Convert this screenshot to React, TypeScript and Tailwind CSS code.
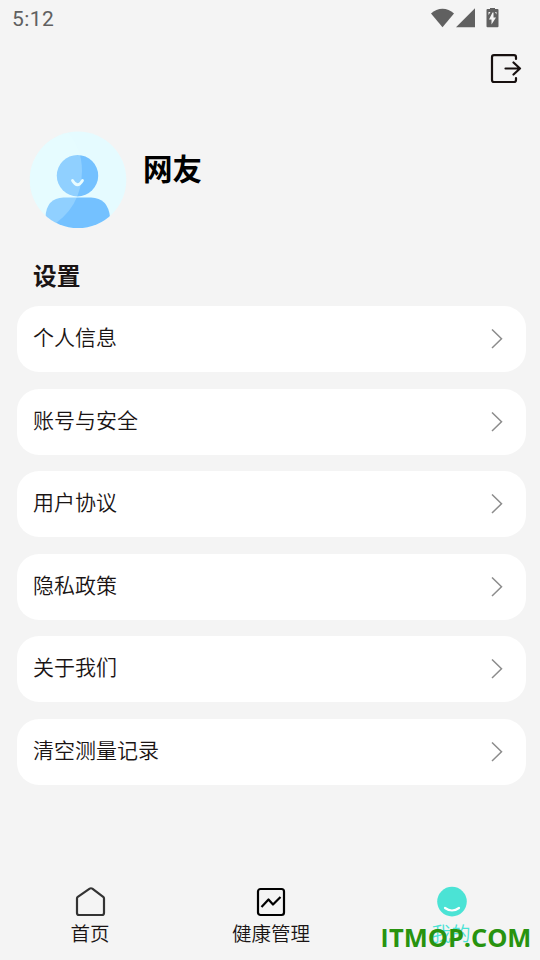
interface MenuRowProps {
  label: string
}

const menuItems = ['个人信息', '账号与安全', '用户协议', '隐私政策', '关于我们', '清空测量记录']

function StatusBar() {
  return (
    <header className="flex h-[38px] items-center justify-between pl-3 pr-[41px] text-[#606060]">
      <span className="font-['Roboto',sans-serif] text-[21px] leading-none tracking-[0.4px]">5:12</span>
      <svg width="68" height="22" viewBox="0 0 68 22" fill="currentColor" aria-hidden="true">
        <path d="M0 5.500C6.500-1 16.500-1 23 5.500L11.500 19.300Z" />
        <path d="M25 19.300 44 .3v19Z" />
        <path
          fillRule="evenodd"
          d="M59 -.5h5v1.500h2.500q1 0 1 1v16.300q0 1-1 1h-10q-1 0-1-1v-16.300q0-1 1-1H59ZM61.500 4.500 58 11.500h2.500v5L65 9.500h-2.500V4.500ZM57.500 4v3L59.500 4ZM64 4l1.500 2.500V4Z"
        />
      </svg>
    </header>
  )
}

function LogoutIcon() {
  return (
    <svg
      width="32"
      height="30"
      viewBox="0 0 32 30"
      fill="none"
      stroke="#17100f"
      strokeWidth="2.200"
      strokeLinecap="round"
      strokeLinejoin="round"
    >
      <path d="M26 5V3.200q0-2-2-2H4q-2 0-2 2V26q0 2 2 2h20q2 0 2-2v-2" />
      <path d="M15.500 14.500H30M23.500 8.500l6.500 6-6.500 6" />
    </svg>
  )
}

function Avatar() {
  return (
    <svg width="98" height="98" viewBox="0 0 98 98" aria-hidden="true">
      <defs>
        <clipPath id="disc">
          <circle cx="49" cy="48.800" r="48.300" />
        </clipPath>
      </defs>
      <g clipPath="url(#disc)">
        <path fill="#e5fbff" d="M0 0h98v98H0z" />
        <circle cx="48.500" cy="44.700" r="20.700" fill="#74c1ff" />
        <path fill="#74c1ff" d="M16.500 86q1-19 18-19.500h27.500q17 .5 19 19.500v12H16.500Z" />
        <path fill="#e9ffff" fillOpacity=".24" d="M0 0h38Q53 17 53 40 53 78 18 98H0Z" />
      </g>
      <path d="M43.500 49.500q5 8.500 10 0" fill="none" stroke="#e9fcff" strokeWidth="2.800" strokeLinecap="round" />
    </svg>
  )
}

function MenuRow({ label }: MenuRowProps) {
  return (
    <button className="flex h-[66px] w-full items-center justify-between rounded-[22px] bg-white pl-4 pr-[23px]">
      <span className="-mt-1.5 text-[21px] font-[350] leading-[30px] text-[#1a1414]">{label}</span>
      <svg width="12" height="20" viewBox="0 0 12 20" fill="none" stroke="#8c8c8c" strokeWidth="1.500">
        <path d="m1 .5 9.500 9.200L1 19" />
      </svg>
    </button>
  )
}

function TabBar() {
  return (
    <nav className="grid h-[78px] grid-cols-3 text-[19.5px] font-[350] leading-[29px] text-[#1a1414]">
      <button className="flex flex-col items-center pt-1">
        <svg width="32" height="32" viewBox="0 0 32 32" fill="none" stroke="#333" strokeWidth="2.200" strokeLinejoin="round">
          <path d="M3 12.500q0-1 .8-1.600L15.700 2.700q1.300-.9 2.600 0l10.900 8.200q.8.600.8 1.600V27q0 2-2 2H5q-2 0-2-2Z" />
        </svg>
        <span>首页</span>
      </button>
      <button className="flex flex-col items-center pl-0.5 pt-1">
        <svg
          width="32"
          height="32"
          viewBox="0 0 32 32"
          fill="none"
          stroke="#000"
          strokeWidth="2.200"
          strokeLinejoin="round"
        >
          <rect x="3" y="3" width="26" height="26" rx="2.500" />
          <path d="m6.500 21 7-7.500 4.500 5 7.500-7.500" />
        </svg>
        <span>健康管理</span>
      </button>
      <button className="flex flex-col items-center pl-0.5 pt-1 text-[#4be3d5]">
        <svg width="32" height="32" viewBox="0 0 32 32" fill="none">
          <circle cx="17" cy="15.600" r="14.800" fill="currentColor" />
          <path d="M10 22q7 5 14 0" stroke="#fff" strokeWidth="2.200" strokeLinecap="round" />
        </svg>
        <span>我的</span>
      </button>
    </nav>
  )
}

function App() {
  return (
    <div className="relative flex h-[960px] w-[540px] flex-col overflow-hidden bg-[#f4f4f4] font-['Noto_Sans_CJK_SC',sans-serif]">
      <StatusBar />
      <div className="flex h-[93px] justify-end pr-[18px] pt-4">
        <button className="h-[30px]" aria-label="退出">
          <LogoutIcon />
        </button>
      </div>
      <section className="flex gap-4 pl-[29px]">
        <Avatar />
        <h1 className="mt-4 text-[29.5px] font-bold leading-[40px] text-black">网友</h1>
      </section>
      <main className="flex-1 pl-[17px] pr-3.5">
        <h2 className="mt-7 h-[49px] pl-4 text-[23.7px] font-bold leading-[36px] text-[#1a1414]">设置</h2>
        <div className="flex flex-col gap-[16.5px]">
          {menuItems.map((label) => (
            <MenuRow key={label} label={label} />
          ))}
        </div>
      </main>
      <TabBar />
      <span className="absolute left-[381px] top-[920px] font-['Open_Sans',sans-serif] text-[25.5px] font-bold leading-[34px] tracking-[-0.1px] text-[#28930f]">
        <span className="font-['Liberation_Sans',sans-serif] tracking-[1px]">I</span>TMOP.COM
      </span>
    </div>
  )
}

export default App
